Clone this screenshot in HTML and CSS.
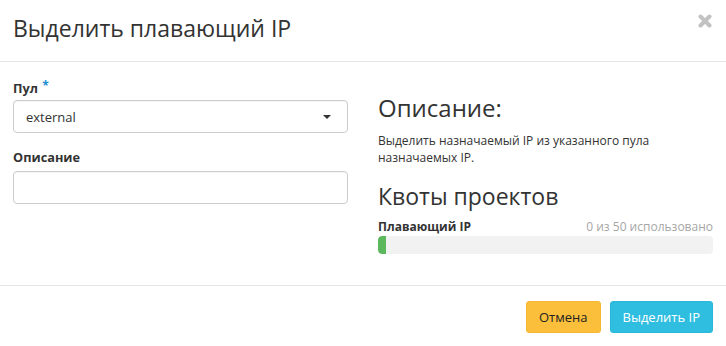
FILE: index.html
```html
<!DOCTYPE html>
<html lang="ru">
<head>
    <meta charset="UTF-8">
    <meta name="viewport" content="width=device-width, initial-scale=1.0">
    <title>Выделить плавающий IP</title>
    <link rel="stylesheet" href="styles.css">
</head>
<body>
    <div class="modal">
        <div class="modal-header">
            <h4 class="modal-title">Выделить плавающий IP</h4>
            <button type="button" class="close" aria-label="Закрыть">
                <svg width="14" height="14" viewBox="0 0 14 14">
                    <path d="M2.5 2.5 L11.5 11.5 M11.5 2.5 L2.5 11.5" stroke="#c2c2c2" stroke-width="4" stroke-linecap="round"/>
                </svg>
            </button>
        </div>

        <div class="modal-body">
            <div class="form-col">
                <div class="form-group">
                    <label for="pool">Пул <span class="required">*</span></label>
                    <div class="select-wrap">
                        <select id="pool">
                            <option>external</option>
                        </select>
                    </div>
                </div>
                <div class="form-group">
                    <label for="description">Описание</label>
                    <input type="text" id="description">
                </div>
            </div>

            <div class="help-col">
                <h3>Описание:</h3>
                <p>Выделить назначаемый IP из указанного пула назначаемых IP.</p>

                <h3 class="quota-title">Квоты проектов</h3>
                <div class="quota-row">
                    <strong>Плавающий IP</strong>
                    <span class="quota-used">0 из 50 использовано</span>
                </div>
                <div class="progress">
                    <div class="progress-bar" style="width: 0%"></div>
                </div>
            </div>
        </div>

        <div class="modal-footer">
            <button type="button" class="btn btn-cancel">Отмена</button>
            <button type="button" class="btn btn-primary">Выделить IP</button>
        </div>
    </div>
</body>
</html>
```

FILE: styles.css
```css
body {
    font-family: "Open Sans", "DejaVu Sans", sans-serif;
    font-size: 12px;
    line-height: 17px;
    color: #333;
    background-color: #ffffff;
    margin: 0;
}
.modal {
    width: 726px;
    height: 346px;
    display: flex;
    flex-direction: column;
}
.modal-header {
    display: flex;
    justify-content: space-between;
    align-items: flex-start;
    padding: 15px 13px 20px;
    border-bottom: 1px solid #e5e5e5;
}
.modal-title {
    margin: 0;
    font-size: 23px;
    font-weight: normal;
    line-height: 26px;
    color: #333;
}
.close {
    background: none;
    border: none;
    padding: 0;
    margin: -1px 1px 0 0;
    cursor: pointer;
}
.modal-body {
    flex: 1;
    display: grid;
    grid-template-columns: 1fr 1fr;
    column-gap: 30px;
    padding: 18px 13px 0;
}
.form-group {
    margin-bottom: 16px;
}
.form-group label {
    display: block;
    margin-bottom: 5px;
    font-size: 12.75px;
    font-weight: bold;
    color: #333;
}
.form-group:first-child label {
    margin-bottom: 3px;
}
.required {
    color: #1b8ad6;
    font-size: 12px;
    line-height: 1;
    position: relative;
    top: -3px;
    margin-left: 1px;
}
.select-wrap {
    position: relative;
}
.select-wrap::after {
    content: "";
    position: absolute;
    right: 17px;
    top: 15px;
    border-left: 4px solid transparent;
    border-right: 4px solid transparent;
    border-top: 4px solid #333;
    pointer-events: none;
}
.form-group select,
.form-group input[type="text"] {
    display: block;
    width: 100%;
    height: 33px;
    box-sizing: border-box;
    padding: 0 12px;
    border: 1px solid #cccccc;
    border-radius: 4px;
    background-color: #ffffff;
    font-family: inherit;
    font-size: 13px;
    color: #333;
    box-shadow: inset 0 1px 1px rgba(0, 0, 0, 0.04);
}
.form-group select {
    -webkit-appearance: none;
    appearance: none;
}
.help-col h3 {
    margin: 15px 0 11px;
    font-size: 24px;
    font-weight: normal;
    line-height: 26px;
    color: #333;
}
.help-col p {
    margin: 0 0 17px;
}
.help-col .quota-title {
    margin: 0 0 10px;
    font-size: 23px;
}
.quota-row {
    display: flex;
    justify-content: space-between;
    align-items: baseline;
    font-size: 12px;
    line-height: 16px;
}
.quota-used {
    color: #a6a6a6;
}
.progress {
    height: 18px;
    margin-top: 1px;
    background-color: #f2f2f2;
    border-radius: 4px;
    overflow: hidden;
}
.progress-bar {
    height: 100%;
    min-width: 8px;
    background-color: #5cb85c;
    border-radius: 4px 0 0 4px;
}
.modal-footer {
    display: flex;
    justify-content: flex-end;
    gap: 9px;
    padding: 15px 13px 13px;
    border-top: 1px solid #e5e5e5;
}
.btn {
    height: 32px;
    padding: 0 12px;
    border: 1px solid transparent;
    border-radius: 3px;
    font-family: inherit;
    font-size: 13px;
    cursor: pointer;
}
.btn-cancel {
    background-color: #fcbf3c;
    border-color: #f6b733;
    color: #222;
}
.btn-primary {
    background-color: #30bee0;
    border-color: #2bb7d8;
    color: #ffffff;
}
```
